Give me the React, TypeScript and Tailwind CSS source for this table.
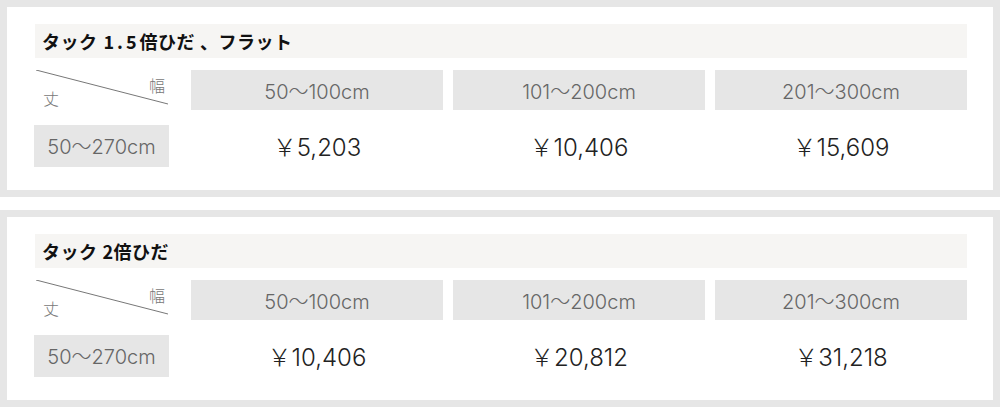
import React from "react";

const cjk = { fontFamily: '"Noto Sans CJK JP", "Noto Sans", sans-serif' };
const num = { fontFamily: 'Inter, "Noto Sans CJK JP", sans-serif' };

type Table = { title: React.ReactNode; prices: string[] };

const tables: Table[] = [
  {
    title: (
      <>
        <span>タック</span>
        <span className="ml-[6px] tracking-[3px]">1.5</span>
        <span>倍ひだ</span>
        <span className="ml-[5px]">、フラット</span>
      </>
    ),
    prices: ["￥5,203", "￥10,406", "￥15,609"],
  },
  {
    title: (
      <>
        <span>タック</span>
        <span className="ml-[5px]">2倍ひだ</span>
      </>
    ),
    prices: ["￥10,406", "￥20,812", "￥31,218"],
  },
];

const widths = ["50～100cm", "101～200cm", "201～300cm"];

function PriceBox({ t }: { t: Table }) {
  return (
    <div className="h-[197px] border-[7px] border-[#e6e6e6] bg-white pt-[17px] pl-[27px] pr-[26px]">
      <div
        className="h-[34px] ml-[1px] bg-[#f6f5f3] flex items-center pl-[7px] text-[18px] font-bold text-[#111] tracking-[0.5px]"
        style={cjk}
      >
        {t.title}
      </div>
      <div className="mt-[12px] flex">
        <div className="relative h-[40px] w-[135px]">
          <svg className="absolute left-[2px] top-0" width="134" height="36" viewBox="0 0 134 36">
            <line x1="0" y1="0" x2="132" y2="34" stroke="#777" strokeWidth="1" />
          </svg>
          <span className="absolute left-[9px] top-[20px] text-[16px] leading-none text-[#777] font-light" style={cjk}>
            丈
          </span>
          <span className="absolute left-[115px] top-[7px] text-[16px] leading-none text-[#777] font-light" style={cjk}>
            幅
          </span>
        </div>
        <div className="ml-[22px] flex gap-[10px]">
          {widths.map((w) => (
            <div
              key={w}
              className="h-[40px] w-[252px] bg-[#e6e6e6] flex items-center justify-center pt-[3px] text-[20px] text-[#666] font-light"
              style={num}
            >
              {w}
            </div>
          ))}
        </div>
      </div>
      <div className="mt-[15px] flex">
        <div
          className="h-[42px] w-[135px] bg-[#e6e6e6] flex items-center justify-center pt-[2px] text-[20px] text-[#666] font-light"
          style={num}
        >
          50～270cm
        </div>
        <div className="ml-[22px] flex gap-[10px]">
          {t.prices.map((p, i) => (
            <div
              key={i}
              className="h-[42px] w-[252px] flex items-center justify-center pt-[4px] text-[24px] text-[#222] font-light"
              style={num}
            >
              {p}
            </div>
          ))}
        </div>
      </div>
    </div>
  );
}

export default function App() {
  return (
    <div className="w-[1000px] h-[416px] bg-white flex flex-col gap-[13px]">
      {tables.map((t, i) => (
        <PriceBox key={i} t={t} />
      ))}
    </div>
  );
}
